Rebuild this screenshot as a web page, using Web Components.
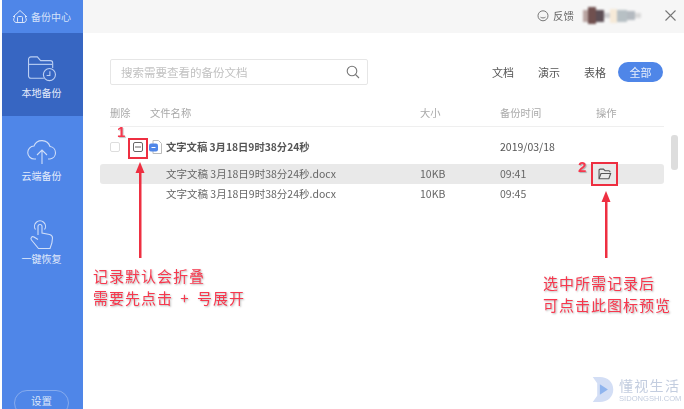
<!DOCTYPE html>
<html lang="zh">
<head>
<meta charset="utf-8">
<title>备份中心</title>
<style>
html, body { margin: 0; height: 100%; background: #fff; overflow: hidden; }
body { font-family: "Noto Sans CJK SC", "Noto Sans", sans-serif; }
</style>
</head>
<body>
<backup-app>
  <side-nav slot="nav">
    <nav-item icon="local" active>本地备份</nav-item>
    <nav-item icon="cloud">云端备份</nav-item>
    <nav-item icon="restore">一键恢复</nav-item>
  </side-nav>
  <top-bar slot="top"></top-bar>
  <search-bar slot="tools"></search-bar>
  <filter-tabs slot="tools"></filter-tabs>
  <file-table slot="main">
    <group-row name="文字文稿 3月18日9时38分24秒" date="2019/03/18"></group-row>
    <file-row name="文字文稿 3月18日9时38分24秒.docx" size="10KB" time="09:41" selected></file-row>
    <file-row name="文字文稿 3月18日9时38分24秒.docx" size="10KB" time="09:45"></file-row>
  </file-table>
</backup-app>
<note-layer></note-layer>
<water-mark></water-mark>

<script>
const ICONS = {
  local: `<svg width="30" height="26" viewBox="0 0 32 28" fill="none" stroke="#bccff3" stroke-width="1.200">
    <path d="M18 24H4a2.500 2.500 0 0 1-2.500-2.500V3.500A2.500 2.500 0 0 1 4 1h7l3.500 4H25a2.500 2.500 0 0 1 2.500 2.500V13"/>
    <path d="M2 9h25"/><circle cx="24" cy="20" r="6.500"/><path d="M24.500 16.500V21H21"/></svg>`,
  cloud: `<svg width="30" height="26" viewBox="0 0 30 26" fill="none" stroke="#d0def8" stroke-width="1.100">
    <path d="M9 20H7.500a6.500 6.500 0 0 1-.5-13A8.500 8.500 0 0 1 23 7.500a6.300 6.300 0 0 1 0 12.500h-2"/>
    <path d="M15 25V11M10 16l5-5 5 5"/></svg>`,
  restore: `<svg width="26" height="30" viewBox="0 0 26 30" fill="none" stroke="#d0def8" stroke-width="1.100">
    <path d="M6.500 9.500a5.500 5.500 0 1 1 9 0"/>
    <path d="M9 15V6.500a2 2 0 0 1 4 0V13l7.500 1.500c2 .5 3 1.800 3 3.500 0 4-1 7-2.500 10.500H9.500L2.500 20c-1.500-2 .5-4.300 2.500-3l4 2.500"/></svg>`
}

class BackupApp extends HTMLElement {
  constructor() {
    super()
    this.attachShadow({ mode: 'open' })
    this.shadowRoot.innerHTML = `
    <style>
    :host { display: grid; grid-template-columns: 81px 1fr; width: 682px; height: 409px; margin-left: 2px; filter: blur(.5px); }
    .right { display: flex; flex-direction: column; min-width: 0; }
    .tools { display: flex; align-items: center; justify-content: space-between; padding: 26px 21px 0 27px; height: 26px; }
    </style>
    <slot name="nav"></slot>
    <div class="right">
      <slot name="top"></slot>
      <div class="tools"><slot name="tools"></slot></div>
      <slot name="main"></slot>
    </div>`
  }
}

class SideNav extends HTMLElement {
  constructor() {
    super()
    this.attachShadow({ mode: 'open' })
    this.shadowRoot.innerHTML = `
    <style>
    :host { display: flex; flex-direction: column; height: 409px; overflow: hidden; background: #4f86e8; color: #fff; }
    header { height: 33px; display: flex; align-items: center; gap: 3px; padding-left: 10px; font-size: 10px; color: #d5e2fa; }
    .foot { margin-top: auto; display: flex; justify-content: center; height: 19px; padding-right: 2px; }
    .foot span { width: 55px; height: 26px; box-sizing: border-box; border: 1px solid #86abee; border-radius: 13px; font-size: 10.500px; line-height: 19px; text-align: center; color: #dbe6fa; }
    </style>
    <header>
      <svg width="16" height="16" viewBox="0 0 16 16" fill="none" stroke="#dbe6fa" stroke-width="1">
        <path d="M1 8l7-6.500L15 8M2.500 7v1.500a3 3 0 0 0 1.500 5h8a3 3 0 0 0 1.500-5V7"/>
        <rect x="5.500" y="7.500" width="5" height="6" rx="1"/>
      </svg>
      <span>备份中心</span>
    </header>
    <slot></slot>
    <div class="foot"><span>设置</span></div>`
  }
}

class NavItem extends HTMLElement {
  constructor() {
    super()
    this.attachShadow({ mode: 'open' })
    this.shadowRoot.innerHTML = `
    <style>
    :host { display: flex; flex-direction: column; align-items: center; height: 83px; box-sizing: border-box; padding: 21px 2px 0 0; font-size: 10px; color: #e3ebfb; }
    :host([active]) { background: #3766c2; }
    .ic { height: 29px; display: flex; align-items: center; }
    .lb { margin-top: 3px; line-height: 14px; }
    </style>
    <div class="ic" data-icon></div>
    <div class="lb"><slot></slot></div>`
  }
  connectedCallback() {
    this.shadowRoot.querySelector('[data-icon]').innerHTML = ICONS[this.getAttribute('icon')]
  }
}

class TopBar extends HTMLElement {
  constructor() {
    super()
    this.attachShadow({ mode: 'open' })
    this.shadowRoot.innerHTML = `
    <style>
    :host { display: flex; align-items: center; height: 33px; padding: 0 0 2px 454px; background: #f6f6f6; color: #666; font-size: 10.500px; box-sizing: border-box; }
    .fb { margin-left: 4px; width: 32px; }
    .blur { display: flex; width: 60px; height: 18px; margin-left: -2px; align-items: center; filter: blur(1.200px); }
    .blur i { display: block; height: 12px; }
    svg.x { margin-left: 22px; }
    </style>
    <svg width="12" height="12" viewBox="0 0 12 12" fill="none" stroke="#777" stroke-width="1">
      <path d="M6 .8a5 5 0 0 1 0 10 5 5 0 0 1-5-5 5 5 0 0 1 5-5z"/><path d="M3.500 7.200c1.500 1 3.500 1 5 0"/>
    </svg>
    <span class="fb">反馈</span>
    <div class="blur">
      <i style="width:5px;background:#b9a5a2"></i>
      <i style="width:8px;height:17px;background:#70504f"></i>
      <i style="width:8px;background:#5d4f56"></i>
      <i style="width:6px;height:5px;background:#cfcfd2"></i>
      <i style="width:7px;height:14px;background:#f6ead8"></i>
      <i style="width:10px;background:#b7c0c4"></i>
      <i style="width:8px;height:9px;background:#b4bac0"></i>
      <i style="width:6px;height:5px;background:#d9d9d9"></i>
    </div>
    <svg class="x" width="11" height="11" viewBox="0 0 11 11" stroke="#777" stroke-width="1.100"><path d="M.5.500l10 10M10.500.500l-10 10"/></svg>`
  }
}

class SearchBar extends HTMLElement {
  constructor() {
    super()
    this.attachShadow({ mode: 'open' })
    this.shadowRoot.innerHTML = `
    <style>
    :host { display: flex; align-items: center; justify-content: space-between; box-sizing: border-box; width: 258px; height: 26px; border: 1px solid #e6e6e6; border-radius: 2px; padding: 0 7px 0 10px; font-size: 11.500px; color: #c2c2c2; }
    </style>
    <span>搜索需要查看的备份文档</span>
    <svg width="14" height="14" viewBox="0 0 14 14" fill="none" stroke="#777" stroke-width="1.100"><circle cx="6" cy="6" r="4.800"/><path d="M9.500 9.500l3.500 3.500"/></svg>`
  }
}

class FilterTabs extends HTMLElement {
  constructor() {
    super()
    this.attachShadow({ mode: 'open' })
    this.shadowRoot.innerHTML = `
    <style>
    :host { display: flex; align-items: center; gap: 24px; font-size: 11px; color: #555; }
    b { font-weight: 400; width: 45px; height: 20px; margin-left: -12px; line-height: 20px; border-radius: 10px; text-align: center; background: #4f86e8; color: #e8effc; }
    </style>
    <span>文档</span><span>演示</span><span>表格</span><b>全部</b>`
  }
}

class FileTable extends HTMLElement {
  constructor() {
    super()
    this.attachShadow({ mode: 'open' })
    this.shadowRoot.innerHTML = `
    <style>
    :host { display: block; position: relative; font-size: 10px; color: #666; padding: 19px 0 0 17px; }
    .head { display: grid; grid-template-columns: 40px 270px 80px 96px 1fr; height: 22px; margin: 0 20px 0 10px; border-bottom: 1px solid #efefef; line-height: 18px; font-size: 10.300px; color: #a9a9a9; }
    .bar { position: absolute; left: 588px; top: 50px; width: 7px; height: 35px; border-radius: 3px; background: #ddd; }
    </style>
    <div class="head"><span>删除</span><span>文件名称</span><span>大小</span><span>备份时间</span><span>操作</span></div>
    <slot></slot>
    <div class="bar"></div>`
  }
}

class GroupRow extends HTMLElement {
  constructor() {
    super()
    this.attachShadow({ mode: 'open' })
    this.shadowRoot.innerHTML = `
    <style>
    :host { display: flex; align-items: center; box-sizing: border-box; height: 37px; padding: 2px 0 0 10px; font-size: 10.300px; color: #555; }
    .ck { width: 10px; height: 10px; box-sizing: border-box; border: 1px solid #ddd; border-radius: 2px; margin-right: 13px; }
    .mi { margin-right: 6px; }
    .fi { margin-right: 4px; }
    .nm { width: 334px; font-weight: 700; }
    .dt { font-size: 10.500px; }
    </style>
    <div class="ck"></div>
    <svg class="mi" width="10" height="10" viewBox="0 0 10 10" fill="none" stroke="#666"><rect x=".5" y=".5" width="9" height="9" rx="1.500"/><path d="M2 5h6"/></svg>
    <svg class="fi" width="13" height="14" viewBox="0 0 13 14"><path d="M4 .5h5.500l3 3v10H4z" fill="#fff" stroke="#bbb"/><rect y="3.500" width="9" height="8" rx="2" fill="#4f86e8"/><path d="M2.500 7.500h4" stroke="#fff"/></svg>
    <span class="nm" data-name></span>
    <span class="dt" data-date></span>`
  }
  connectedCallback() {
    this.shadowRoot.querySelector('[data-name]').textContent = this.getAttribute('name')
    this.shadowRoot.querySelector('[data-date]').textContent = this.getAttribute('date')
  }
}

class FileRow extends HTMLElement {
  constructor() {
    super()
    this.attachShadow({ mode: 'open' })
    this.shadowRoot.innerHTML = `
    <style>
    :host { display: flex; align-items: center; box-sizing: border-box; height: 20px; margin-right: 20px; padding: 0 0 1px 66px; border-radius: 3px; font-size: 10.500px; color: #666; }
    :host([selected]) { background: #e9e9e9; }
    .nm { width: 254px; } .sz { width: 80px; } .tm { width: 97px; }
    svg { visibility: hidden; }
    :host([selected]) svg { visibility: visible; }
    </style>
    <span class="nm" data-name></span>
    <span class="sz" data-size></span>
    <span class="tm" data-time></span>
    <svg width="15" height="12" viewBox="0 0 13 11" fill="none" stroke="#555"><path d="M1.500 9.500V2a1 1 0 0 1 1-1h3l1.500 1.500h3.500a1 1 0 0 1 1 1V4"/><path d="M1.500 9.800L3.300 5h8.800l-1.600 4.800z"/></svg>`
  }
  connectedCallback() {
    this.shadowRoot.querySelector('[data-name]').textContent = this.getAttribute('name')
    this.shadowRoot.querySelector('[data-size]').textContent = this.getAttribute('size')
    this.shadowRoot.querySelector('[data-time]').textContent = this.getAttribute('time')
  }
}

// red hand-drawn notes that lie over the screenshot
class NoteLayer extends HTMLElement {
  constructor() {
    super()
    this.attachShadow({ mode: 'open' })
    this.shadowRoot.innerHTML = `
    <style>
    :host { position: absolute; inset: 0; color: #f7374d; pointer-events: none; filter: blur(.5px); }
    .box { position: absolute; box-sizing: border-box; border: 2px solid #ee2f41; }
    .txt { position: absolute; font-size: 15px; letter-spacing: 1px; line-height: 22px; white-space: nowrap; word-spacing: 3px; text-shadow: 1px 1px 2px rgba(0,0,0,.3); }
    .num { position: absolute; font-size: 15px; line-height: 15px; font-weight: 700; font-family: "Liberation Sans", sans-serif; text-shadow: 1px 1px 1px rgba(0,0,0,.25); }
    svg { position: absolute; left: 0; top: 0; }
    </style>
    <div class="box" style="left:128px;top:138px;width:20px;height:21px"></div>
    <div class="box" style="left:591px;top:162px;width:27px;height:24px"></div>
    <span class="num" style="left:117px;top:124px">1</span>
    <span class="num" style="left:578px;top:159px">2</span>
    <svg width="684" height="409" fill="#ee2f41">
      <rect x="139" y="170" width="2.500" height="88"/><path d="M140 162l4.500 11h-9z"/>
      <rect x="605" y="200" width="2.500" height="58"/><path d="M606 191l4.500 11h-9z"/>
    </svg>
    <div class="txt" style="left:93px;top:265px">记录默认会折叠<br>需要先点击 + 号展开</div>
    <div class="txt" style="left:543px;top:272px">选中所需记录后<br>可点击此图标预览</div>`
  }
}

class WaterMark extends HTMLElement {
  constructor() {
    super()
    this.attachShadow({ mode: 'open' })
    this.shadowRoot.innerHTML = `
    <style>
    :host { position: absolute; left: 591px; top: 377px; display: flex; gap: 4px; filter: blur(.5px); }
    .t { display: flex; flex-direction: column; margin-top: -1px; color: #c3cddf; }
    .a { font-size: 14px; line-height: 19px; letter-spacing: 1.300px; }
    .b { font-size: 7.600px; line-height: 10px; font-family: "Liberation Sans", sans-serif; margin-top: -1px; white-space: nowrap; }
    </style>
    <svg width="24" height="25" viewBox="0 0 23 28">
      <path d="M0 0h8c9 0 15 6 15 14s-6 14-15 14H0l5-7V7z" fill="#d3def5"/>
      <path d="M8 8l9 6-9 6z" fill="#8fb4ee"/>
    </svg>
    <div class="t"><span class="a">懂视生活</span><span class="b">SIDONGSHI.COM</span></div>`
  }
}

customElements.define('backup-app', BackupApp)
customElements.define('side-nav', SideNav)
customElements.define('nav-item', NavItem)
customElements.define('top-bar', TopBar)
customElements.define('search-bar', SearchBar)
customElements.define('filter-tabs', FilterTabs)
customElements.define('file-table', FileTable)
customElements.define('group-row', GroupRow)
customElements.define('file-row', FileRow)
customElements.define('note-layer', NoteLayer)
customElements.define('water-mark', WaterMark)
</script>
</body>
</html>
